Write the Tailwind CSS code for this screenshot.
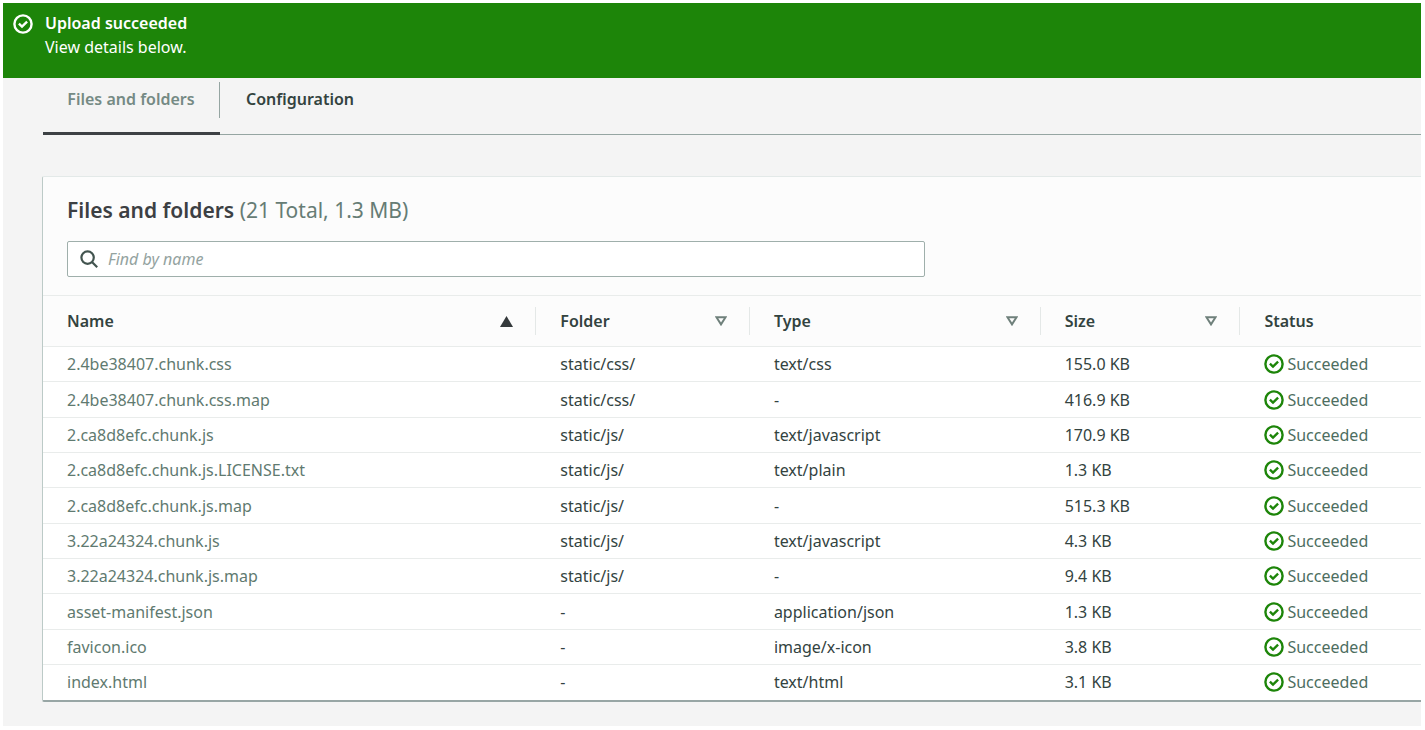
<!DOCTYPE html>
<html lang="en">
<head>
<meta charset="utf-8">
<title>Upload: status</title>
<script src="https://cdn.jsdelivr.net/npm/@tailwindcss/browser@4"></script>
</head>
<body class="bg-white pt-[3px] pr-1 pb-1 pl-[3px] font-['Noto_Sans','Open_Sans',sans-serif] text-base leading-6 text-[#33433f]">
<svg class="hidden" aria-hidden="true">
  <symbol id="check" viewBox="0 0 20 20"><g fill="none" stroke="currentColor" stroke-width="2.4"><circle cx="10" cy="10" r="8.6"/><path d="M5.9 9.7 9 12.6l5.1-4.9"/></g></symbol>
  <symbol id="sort" viewBox="0 0 12 10"><path d="M1.4 1.2h9.2L6 8.4Z" fill="none" stroke="currentColor" stroke-width="2"/></symbol>
</svg>
<div class="bg-[#f4f4f4] pb-6">
  <header role="status" class="flex h-[75px] gap-3 bg-[#1d8509] px-2.5 pt-2 text-white">
    <svg class="mt-[3px] size-5 shrink-0"><use href="#check"/></svg>
    <div>
      <h1 class="font-semibold">Upload succeeded</h1>
      <p>View details below.</p>
    </div>
  </header>

  <nav class="ml-10 flex h-[57px] border-b border-[#95a5a2] font-semibold">
    <div class="-mb-px border-b-[3px] border-[#3d4144]">
      <a href="#files" class="mt-1 flex h-9 w-[177px] items-center justify-center border-r border-[#95a5a2] pb-0.5 text-[#758a84]">Files and folders</a>
    </div>
    <a href="#configuration" class="mt-1 flex h-9 items-center px-[26px] pb-0.5">Configuration</a>
  </nav>

  <main id="files" class="mt-[41px] ml-[39px] rounded-l-xs border-t border-b-2 border-l border-t-[#e3e9e8] border-b-[#98a6a5] border-l-[#bccac7] bg-[#fcfcfc]">
    <div class="px-6 pt-[17px] pb-[18px]">
      <h2 class="text-[21px] leading-8 font-semibold text-[#3c4043]">Files and folders <span class="font-normal text-[#667c75]">(21 Total, 1.3 MB)</span></h2>
      <label class="mt-[15px] flex h-9 w-[64.5%] items-center gap-2.5 rounded-xs border border-[#9fafab] bg-white px-3">
        <svg class="size-[18px] shrink-0" viewBox="0 0 18 18" fill="none" stroke="#42544f" stroke-width="2.2"><circle cx="7.6" cy="7.6" r="6.2"/><path d="m12 12 5.2 5.2"/></svg>
        <input type="text" aria-label="Find by name" placeholder="Find by name" class="min-w-0 grow outline-none placeholder:text-[#94a39f] placeholder:italic">
      </label>
    </div>
    <table class="w-full table-fixed border-collapse text-left">
      <colgroup><col class="w-[35.8%]"><col class="w-[15.5%]"><col class="w-[21.1%]"><col class="w-[14.5%]"><col></colgroup>
      <thead>
        <tr class="h-[51px] border-y border-[#e9eceb] *:p-0 *:font-semibold">
          <th aria-sort="ascending"><div class="flex h-7 items-center justify-between border-r border-[#e4e8e7] pr-[22px] pl-6"><span>Name</span><svg class="h-[11px] w-[13px]" viewBox="0 0 13 11"><path d="M6.5 0 13 11H0Z" fill="#34393b"/></svg></div></th>
          <th><div class="flex h-7 items-center justify-between border-r border-[#e4e8e7] pr-[22px] pl-6"><span>Folder</span><svg class="h-2.5 w-3 text-[#6f807b]"><use href="#sort"/></svg></div></th>
          <th><div class="flex h-7 items-center justify-between border-r border-[#e4e8e7] pr-[22px] pl-6"><span>Type</span><svg class="h-2.5 w-3 text-[#6f807b]"><use href="#sort"/></svg></div></th>
          <th><div class="flex h-7 items-center justify-between border-r border-[#e4e8e7] pr-[22px] pl-6"><span>Size</span><svg class="h-2.5 w-3 text-[#6f807b]"><use href="#sort"/></svg></div></th>
          <th><div class="flex h-7 items-center pl-6">Status</div></th>
        </tr>
      </thead>
      <tbody id="rows" class="bg-white"></tbody>
    </table>
  </main>
</div>
<script>
  const files = [
    ["2.4be38407.chunk.css", "static/css/", "text/css", "155.0 KB"],
    ["2.4be38407.chunk.css.map", "static/css/", "-", "416.9 KB"],
    ["2.ca8d8efc.chunk.js", "static/js/", "text/javascript", "170.9 KB"],
    ["2.ca8d8efc.chunk.js.LICENSE.txt", "static/js/", "text/plain", "1.3 KB"],
    ["2.ca8d8efc.chunk.js.map", "static/js/", "-", "515.3 KB"],
    ["3.22a24324.chunk.js", "static/js/", "text/javascript", "4.3 KB"],
    ["3.22a24324.chunk.js.map", "static/js/", "-", "9.4 KB"],
    ["asset-manifest.json", "-", "application/json", "1.3 KB"],
    ["favicon.ico", "-", "image/x-icon", "3.8 KB"],
    ["index.html", "-", "text/html", "3.1 KB"]
  ];
  document.getElementById("rows").innerHTML = files.map(([name, folder, type, size]) => `
    <tr class="h-[35px] border-b border-[#e9eceb] last:border-b-0 nth-[3n+2]:h-9 *:py-0 *:pl-6">
      <td class="text-[#5f7a70]">${name}</td><td>${folder}</td><td>${type}</td><td>${size}</td>
      <td><span class="flex items-center gap-[3px] text-[#4d6e5f]"><svg class="size-5 text-[#1d8509]"><use href="#check"/></svg>Succeeded</span></td>
    </tr>`).join("");
</script>
</body>
</html>
